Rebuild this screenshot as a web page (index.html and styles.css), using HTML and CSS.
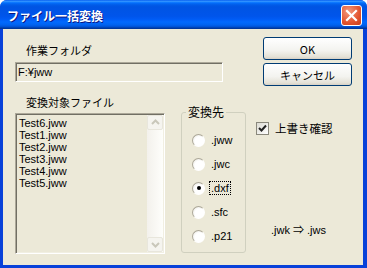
FILE: index.html
```html
<!DOCTYPE html>
<html lang="ja">
<head>
  <meta charset="UTF-8">
  <title>ファイル一括変換</title>
  <link rel="stylesheet" href="styles.css">
</head>
<body>
  <div class="window">
    <div class="titlebar">
      <span class="title">ファイル一括変換</span>
      <span class="close">
        <svg width="21" height="21" viewBox="0 0 21 21">
          <path d="M6 6 L15 15 M15 6 L6 15" stroke="#fff" stroke-width="2.2" stroke-linecap="square"/>
        </svg>
      </span>
    </div>

    <div class="client">
      <div class="top-row">
        <div class="folder">
          <div class="label">作業フォルダ</div>
          <div class="field">F:¥jww</div>
        </div>
        <div class="buttons">
          <button class="btn">OK</button>
          <button class="btn">キャンセル</button>
        </div>
      </div>

      <div class="bottom-row">
        <div class="files">
          <div class="label">変換対象ファイル</div>
          <div class="listbox">
            <ul class="items">
              <li>Test6.jww</li>
              <li>Test1.jww</li>
              <li>Test2.jww</li>
              <li>Test3.jww</li>
              <li>Test4.jww</li>
              <li>Test5.jww</li>
            </ul>
            <div class="scrollbar">
              <span class="sb-btn">
                <svg width="15" height="15" viewBox="0 0 15 15"><path d="M4 9 L7.5 5.5 L11 9" fill="none" stroke="#c9c7ba" stroke-width="2"/></svg>
              </span>
              <span class="sb-track"></span>
              <span class="sb-btn">
                <svg width="15" height="15" viewBox="0 0 15 15"><path d="M4 6 L7.5 9.5 L11 6" fill="none" stroke="#c9c7ba" stroke-width="2"/></svg>
              </span>
            </div>
          </div>
        </div>

        <fieldset class="group">
          <legend>変換先</legend>
          <div class="radio"><span class="dot"></span><span class="rlabel">.jww</span></div>
          <div class="radio"><span class="dot"></span><span class="rlabel">.jwc</span></div>
          <div class="radio"><span class="dot on"></span><span class="rlabel focus">.dxf</span></div>
          <div class="radio"><span class="dot"></span><span class="rlabel">.sfc</span></div>
          <div class="radio"><span class="dot"></span><span class="rlabel">.p21</span></div>
        </fieldset>

        <div class="options">
          <div class="check">
            <span class="box">
              <svg width="11" height="11" viewBox="0 0 11 11"><path d="M2 5 L4.5 7.5 L9 2.5" fill="none" stroke="#222" stroke-width="2"/></svg>
            </span>
            <span>上書き確認</span>
          </div>
          <div class="note">.jwk ⇒ .jws</div>
        </div>
      </div>
    </div>
  </div>
</body>
</html>
```

FILE: styles.css
```css
html, body {
  margin: 0;
  background: #fff;
}
body {
  font-family: "Liberation Sans", "Noto Sans CJK JP", sans-serif;
  font-size: 11px;
  color: #000;
}
.window {
  width: 367px;
  height: 268px;
  display: flex;
  flex-direction: column;
  background: #0841d9;
  border-radius: 7px 7px 0 0;
  overflow: hidden;
}
.titlebar {
  height: 29px;
  flex: none;
  display: flex;
  align-items: center;
  justify-content: space-between;
  padding: 0 5px 0 7px;
  background: linear-gradient(#0058ee 0%, #3593ff 4%, #288eff 6%, #127dff 8%, #036ffc 10%, #0262ee 14%, #0057e5 20%, #0054e3 24%, #0055eb 56%, #005bf5 66%, #026afe 76%, #0062ef 86%, #0052d6 92%, #0040ab 96%, #003092 100%);
}
.title {
  color: #fff;
  font-family: "Noto Sans CJK JP", sans-serif;
  font-weight: bold;
  font-size: 12px;
  text-shadow: 1px 1px #0a1883;
  margin-top: 2px;
}
.close {
  width: 21px;
  height: 21px;
  box-sizing: border-box;
  border: 1px solid #fff;
  border-radius: 3px;
  background: radial-gradient(circle at 35% 30%, #f29a7f, #e3542f 60%, #c83e1c);
  display: flex;
  align-items: center;
  justify-content: center;
  margin-top: 2px;
}
.close svg {
  margin: -1px;
}
.client {
  flex: 1;
  margin: 0 4px 3px 3px;
  background: #ece9d8;
  padding-left: 12px;
}
.label {
  font-family: "Noto Sans CJK JP", sans-serif;
  line-height: 14px;
  height: 14px;
  padding-left: 11px;
}
.top-row {
  display: flex;
}
.folder {
  margin-top: 14px;
  width: 208px;
}
.field {
  margin-top: 5px;
  height: 20px;
  box-sizing: border-box;
  border: 1px solid;
  border-color: #aca899 #fff #fff #aca899;
  box-shadow: inset 1px 1px #716f64;
  padding: 2px 0 0 2px;
  line-height: 15px;
}
.buttons {
  margin: 8px 0 0 40px;
  display: flex;
  flex-direction: column;
  gap: 3px;
}
.btn {
  width: 89px;
  height: 23px;
  border: 1px solid #003c74;
  border-radius: 3px;
  background: linear-gradient(#fff, #f3f3ef 60%, #e4e1d6 90%, #d6d0c5);
  font-family: "Noto Sans CJK JP", sans-serif;
  font-size: 11px;
  color: #000;
  padding: 0;
}
.bottom-row {
  display: flex;
  align-items: flex-start;
  margin-top: 9px;
}
.files {
  width: 150px;
}
.listbox {
  margin-top: 4px;
  height: 141px;
  box-sizing: border-box;
  border: 1px solid;
  border-color: #aca899 #fff #fff #aca899;
  box-shadow: inset 1px 1px #716f64, inset -1px -1px #f1efe2;
  display: flex;
  padding: 1px 1px 1px 1px;
}
.items {
  flex: 1;
  list-style: none;
  margin: 0;
  padding: 2px 0 0 2px;
}
.items li {
  line-height: 12px;
  height: 12px;
}
.scrollbar {
  width: 16px;
  display: flex;
  flex-direction: column;
  background: linear-gradient(to right, #f3f1ec, #fefefb);
}
.sb-btn {
  height: 15px;
  box-sizing: border-box;
  border: 1px solid #e8e6dc;
  border-radius: 2px;
  background: #f5f4ef;
  display: flex;
  align-items: center;
  justify-content: center;
}
.sb-btn svg {
  flex: none;
}
.sb-track {
  flex: 1;
}
.group {
  margin: 10px 0 0 16px;
  width: 65px;
  height: 148px;
  box-sizing: border-box;
  border: 1px solid #d0d0bf;
  border-radius: 3px;
  padding: 9px 0 0 10px;
}
.group legend {
  font-family: "Noto Sans CJK JP", sans-serif;
  font-size: 12px;
  line-height: 14px;
  padding: 0 2px;
  margin-left: -6px;
}
.radio {
  height: 24px;
  display: flex;
  align-items: center;
}
.dot {
  width: 13px;
  height: 13px;
  box-sizing: border-box;
  border-radius: 50%;
  border: 1px solid;
  border-color: #aca899 #fff #fff #aca899;
  background: radial-gradient(circle at 60% 60%, #fff 50%, #e3e1d6);
  display: flex;
  align-items: center;
  justify-content: center;
}
.dot.on::after {
  content: "";
  width: 4px;
  height: 4px;
  border-radius: 50%;
  background: #000;
}
.rlabel {
  margin-left: 4px;
  padding: 0 1px;
  border: 1px solid transparent;
  line-height: 12px;
}
.rlabel.focus {
  border: 1px dotted #000;
}
.options {
  margin-left: 10px;
  height: 170px;
  display: flex;
  flex-direction: column;
  justify-content: space-between;
}
.check {
  margin-top: 25px;
  display: flex;
  align-items: center;
  gap: 6px;
  font-family: "Noto Sans CJK JP", sans-serif;
  font-size: 11.5px;
}
.box {
  width: 13px;
  height: 13px;
  box-sizing: border-box;
  border: 1px solid #8a887c;
  background: linear-gradient(135deg, #dcdbd3, #fff);
  display: flex;
  align-items: center;
  justify-content: center;
}
.note {
  margin-left: 15px;
  margin-bottom: 28px;
}
```
